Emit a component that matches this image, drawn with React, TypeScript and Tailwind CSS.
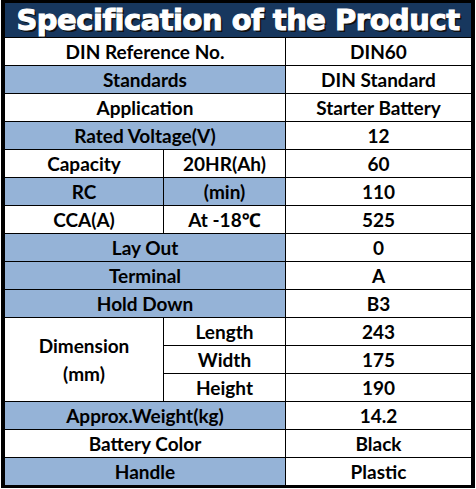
import React from "react";

type Row =
  | { label: string; value: string; blue?: boolean }
  | { label: string; sub: string; value: string; blue?: boolean };

const rows: Row[] = [
  { label: "DIN Reference No.", value: "DIN60" },
  { label: "Standards", value: "DIN Standard", blue: true },
  { label: "Application", value: "Starter Battery" },
  { label: "Rated Voltage(V)", value: "12", blue: true },
  { label: "Capacity", sub: "20HR(Ah)", value: "60" },
  { label: "RC", sub: "(min)", value: "110", blue: true },
  { label: "CCA(A)", sub: "At -18℃", value: "525" },
  { label: "Lay Out", value: "0", blue: true },
  { label: "Terminal", value: "A", blue: true },
  { label: "Hold Down", value: "B3", blue: true },
];

const dims = [
  { sub: "Length", value: "243" },
  { sub: "Width", value: "175" },
  { sub: "Height", value: "190" },
];

const tail: Row[] = [
  { label: "Approx.Weight(kg)", value: "14.2", blue: true },
  { label: "Battery Color", value: "Black" },
  { label: "Handle", value: "Plastic", blue: true },
];

function Cell({ children, blue, className = "" }: { children: React.ReactNode; blue?: boolean; className?: string }) {
  return (
    <div className={`flex items-center justify-center ${blue ? "bg-[#95b3d7]" : "bg-white"} ${className}`}>
      {children}
    </div>
  );
}

function renderRow(r: Row, i: number) {
  if ("sub" in r) {
    return (
      <React.Fragment key={i}>
        <Cell blue={r.blue}>{r.label}</Cell>
        <Cell blue={r.blue}>{r.sub}</Cell>
        <Cell>{r.value}</Cell>
      </React.Fragment>
    );
  }
  return (
    <React.Fragment key={i}>
      <Cell blue={r.blue} className="col-span-2">{r.label}</Cell>
      <Cell>{r.value}</Cell>
    </React.Fragment>
  );
}

export default function App() {
  return (
    <div className="min-h-screen bg-white">
      <div
        className="ml-[1px] w-[474px] border-x-4 border-y-[3px] border-black bg-black text-[19px] font-bold leading-none text-black"
        style={{ fontFamily: "Lato, 'Noto Sans', sans-serif" }}
      >
        <div className="grid grid-cols-[158px_121px_185px] grid-rows-[34px] auto-rows-[27px] gap-px">
          <div
            className="col-span-3 flex items-center justify-center bg-[#17375e] text-[29px] font-bold tracking-[-0.5px] text-white [-webkit-text-stroke:1px_white] [text-shadow:2px_2px_0_#111,1px_1px_0_#000]"
            style={{ fontFamily: "'DejaVu Sans', sans-serif" }}
          >
            Specification of the Product
          </div>
          {rows.map(renderRow)}
          <Cell className="row-span-3 flex-col leading-[28px]">
            <span>Dimension</span>
            <span>(mm)</span>
          </Cell>
          {dims.map((d, i) => (
            <React.Fragment key={"d" + i}>
              <Cell>{d.sub}</Cell>
              <Cell>{d.value}</Cell>
            </React.Fragment>
          ))}
          {tail.map((r, i) => renderRow(r, 100 + i))}
        </div>
      </div>
    </div>
  );
}
